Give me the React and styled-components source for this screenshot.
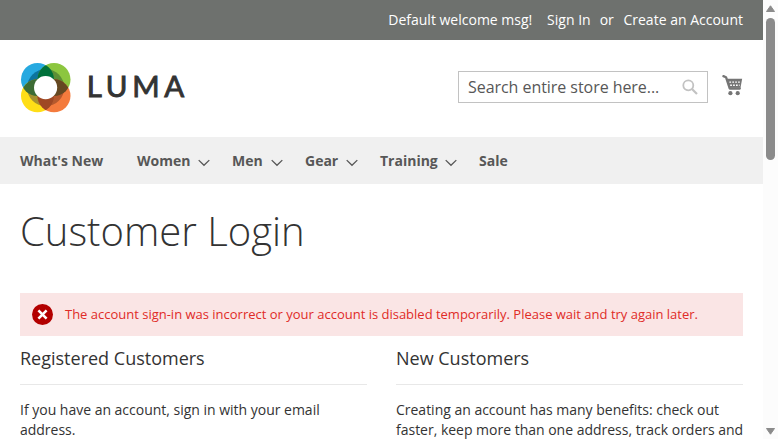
import React from "react";
import styled, { createGlobalStyle } from "styled-components";

const GlobalStyle = createGlobalStyle`
  * { box-sizing: border-box; }
  html, body { margin: 0; padding: 0; overflow: hidden; }
  body { background: #fff; color: #333; font: 400 14px/20px "Open Sans", "Noto Sans", sans-serif; }
`;

const Window = styled.div`
  display: flex;
  width: 778px;
  height: 439px;
  overflow: hidden;
`;
const Page = styled.div`
  width: 763px;
  height: 439px;
  overflow: hidden;
`;
const TopBar = styled.div`
  display: flex;
  justify-content: flex-end;
  height: 40px;
  padding: 10px 20px 0 0;
  background: #6e716e;
  color: #fff;
  white-space: nowrap;
`;
const TopItem = styled.span`
  margin-left: ${(p) => p.$gap}px;
`;
const Header = styled.header`
  display: flex;
  align-items: flex-start;
  height: 97px;
  padding: 22px 20px 0;
`;
const Logo = styled.a`
  display: flex;
  margin-right: auto;
`;
const LogoName = styled.span`
  margin-left: 14.7px;
  padding-top: 9px;
  color: #333;
  font: 400 29.5px/30px Lato, sans-serif;
  letter-spacing: 4.7px;
  -webkit-text-stroke: 0.9px #333;
`;
const Search = styled.div`
  display: flex;
  align-items: center;
  width: 250px;
  height: 32px;
  margin-top: 9px;
  padding: 0 9px;
  border: 1px solid #c2c2c2;
  color: #575757;
  font-size: 16px;
  line-height: 22px;
  letter-spacing: -0.05px;
  white-space: nowrap;
`;
const SearchButton = styled.svg`
  margin-left: auto;
`;
const Cart = styled.svg`
  margin: 12px 0 0 14px;
`;
const Nav = styled.nav`
  display: flex;
  height: 47px;
  padding: 0 20px;
  background: #f0f0f0;
  color: #575757;
  font-weight: 700;
  line-height: 47px;
`;
const NavItem = styled.a`
  display: flex;
  width: ${(p) => p.$width}px;
  white-space: nowrap;
`;
const NavArrow = styled.svg`
  margin: 22px 22px 0 auto;
`;
const Main = styled.main`
  padding: 0 20px;
`;
const Title = styled.h1`
  height: 109px;
  margin: 0;
  padding-top: 25px;
  font-size: 40px;
  font-weight: 300;
  line-height: 44px;
`;
const Message = styled.div`
  display: flex;
  align-items: center;
  height: 43px;
  padding-left: 12px;
  gap: 12px;
  background: #fae5e5;
  color: #e02b27;
  font-size: 13px;
  letter-spacing: -0.005px;
  white-space: nowrap;
`;
const MessageText = styled.span`
  padding-bottom: 2px;
`;
const Columns = styled.div`
  display: grid;
  grid-template-columns: 347px 347px;
  justify-content: space-between;
`;
const BlockTitle = styled.h2`
  height: 49px;
  margin: 0 0 15px;
  padding-top: 12px;
  border-bottom: 1px solid #e8e8e8;
  font-size: 18px;
  font-weight: 400;
  line-height: 20px;
`;
const Copy = styled.p`
  margin: 0;
  letter-spacing: -0.012px;
  white-space: nowrap;
`;
const Scrollbar = styled.div`
  display: flex;
  flex-direction: column;
  align-items: center;
  width: 15px;
  padding: 5px 0 4px;
  background: #fcfcfc;
`;
const Thumb = styled.div`
  width: 9px;
  height: 142px;
  margin: 6px 0 auto;
  border-radius: 5px;
  background: #8b8b8b;
`;

function LogoMark() {
  return (
    <svg width="52" height="52" viewBox="0 0 52 52">
      <defs>
        <clipPath id="blue"><circle cx="17.5" cy="17.5" r="16.5" /></clipPath>
        <clipPath id="green"><circle cx="34" cy="17.5" r="16.5" /></clipPath>
        <clipPath id="yellow"><circle cx="17.5" cy="33.8" r="16.5" /></clipPath>
        <clipPath id="orange"><circle cx="34" cy="33.8" r="16.5" /></clipPath>
      </defs>
      <circle cx="17.5" cy="17.5" r="16.5" fill="#26a9e0" />
      <circle cx="34" cy="17.5" r="16.5" fill="#8cc63f" />
      <circle cx="17.5" cy="33.8" r="16.5" fill="#ffde17" />
      <circle cx="34" cy="33.8" r="16.5" fill="#f47b3d" />
      <circle cx="25.7" cy="25.6" r="18.6" fill="#0c749e" clipPath="url(#blue)" />
      <circle cx="25.7" cy="25.6" r="18.6" fill="#5d8f35" clipPath="url(#green)" />
      <circle cx="25.7" cy="25.6" r="18.6" fill="#a6912f" clipPath="url(#yellow)" />
      <circle cx="25.7" cy="25.6" r="18.6" fill="#b5592d" clipPath="url(#orange)" />
      <g clipPath="url(#blue)">
        <circle cx="34" cy="17.5" r="16.5" fill="#00713b" />
        <circle cx="17.5" cy="33.8" r="16.5" fill="#3d6c35" />
      </g>
      <g clipPath="url(#orange)">
        <circle cx="34" cy="17.5" r="16.5" fill="#654821" />
        <circle cx="17.5" cy="33.8" r="16.5" fill="#9f4824" />
      </g>
      <circle cx="25.6" cy="25.6" r="11.6" fill="#fff" />
    </svg>
  );
}

const links = [
  { label: "What's New", width: 117 },
  { label: "Women", width: 95, arrow: true },
  { label: "Men", width: 73, arrow: true },
  { label: "Gear", width: 75, arrow: true },
  { label: "Training", width: 99, arrow: true },
  { label: "Sale", width: 40 },
];

export default function App() {
  return (
    <>
      <GlobalStyle />
      <Window>
        <Page>
          <TopBar>
            <TopItem $gap={0}>Default welcome msg!</TopItem>
            <TopItem $gap={14.8}>Sign In</TopItem>
            <TopItem $gap={9}>or</TopItem>
            <TopItem $gap={9.7}>Create an Account</TopItem>
          </TopBar>
          <Header>
            <Logo>
              <LogoMark />
              <LogoName>LUMA</LogoName>
            </Logo>
            <Search>
              Search entire store here...
              <SearchButton width="16" height="16" viewBox="0 0 16 16" fill="none" stroke="#c2c2c2">
                <circle cx="6.3" cy="6.3" r="5" strokeWidth="1.8" />
                <path d="M10 10l5 5" strokeWidth="2.2" />
              </SearchButton>
            </Search>
            <Cart width="21" height="22" viewBox="0 0 21 22">
              <path d="M1.4 2.1l2.6 1.1 3.7 11.3H17.8" fill="none" stroke="#757575" strokeWidth="2.3" strokeLinecap="round" strokeLinejoin="round" />
              <path d="M4.6 4.8H20.2l-1.7 8.9H7.4z" fill="#757575" />
              <path d="M7.4 8.1h11M8.2 11.3h9.4" stroke="#fff" strokeWidth="1.4" strokeDasharray="1.7 1.2" />
              <circle cx="8.4" cy="19.2" r="2.1" fill="#757575" />
              <circle cx="15.7" cy="19.2" r="2.1" fill="#757575" />
            </Cart>
          </Header>
          <Nav>
            {links.map((l) => (
              <NavItem key={l.label} $width={l.width}>
                {l.label}
                {l.arrow && (
                  <NavArrow width="12" height="8" viewBox="0 0 12 8">
                    <path d="M.7 1.1L6 6.3l5.3-5.2" fill="none" stroke="#575757" strokeWidth="1.3" />
                  </NavArrow>
                )}
              </NavItem>
            ))}
          </Nav>
          <Main>
            <Title>Customer Login</Title>
            <Message>
              <svg width="21" height="21" viewBox="0 0 21 21">
                <circle cx="10.5" cy="10.5" r="10.5" fill="#b30000" />
                <path d="M6.4 6.4l8.2 8.2M14.6 6.4l-8.2 8.2" stroke="#fff" strokeWidth="2.6" />
              </svg>
              <MessageText>
                The account sign-in was incorrect or your account is disabled temporarily. Please wait and try again later.
              </MessageText>
            </Message>
            <Columns>
              <section>
                <BlockTitle>Registered Customers</BlockTitle>
                <Copy>If you have an account, sign in with your email<br />address.</Copy>
              </section>
              <section>
                <BlockTitle>New Customers</BlockTitle>
                <Copy>Creating an account has many benefits: check out<br />faster, keep more than one address, track orders and</Copy>
              </section>
            </Columns>
          </Main>
        </Page>
        <Scrollbar>
          <svg width="9" height="7" viewBox="0 0 9 7"><path d="M4.5.8L8.5 6.5h-8z" fill="#8b8b8b" stroke="#8b8b8b" strokeLinejoin="round" /></svg>
          <Thumb />
          <svg width="9" height="7" viewBox="0 0 9 7"><path d="M4.5 6.2L8.5.5h-8z" fill="#8b8b8b" stroke="#8b8b8b" strokeLinejoin="round" /></svg>
        </Scrollbar>
      </Window>
    </>
  );
}
